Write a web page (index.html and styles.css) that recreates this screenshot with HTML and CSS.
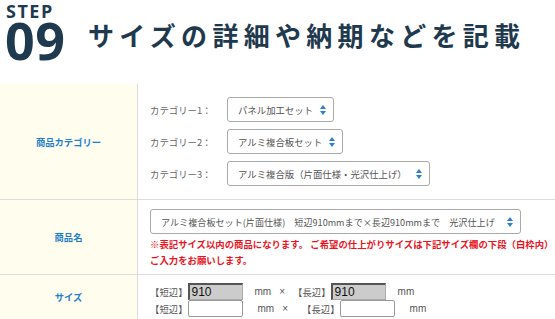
FILE: index.html
```html
<!DOCTYPE html>
<html lang="ja">
<head>
<meta charset="utf-8">
<title>STEP 09</title>
<link rel="stylesheet" href="styles.css">
</head>
<body>
<header class="step-head">
  <div class="step-num">
    <span class="step-label">STEP</span>
    <span class="step-digits">09</span>
  </div>
  <h1 class="step-title">サイズの詳細や納期などを記載</h1>
</header>

<section class="form-table">
  <div class="row row-cat">
    <div class="label">商品カテゴリー</div>
    <div class="field cat-field">
      <div class="cat-line">
        <span class="cat-name">カテゴリー1：</span>
        <div class="select"><span class="sel-text">パネル加工セット</span><svg class="arrows" viewBox="0 0 6 10" width="6" height="10"><path d="M3 0 L6 4 L0 4 Z M0 6 L6 6 L3 10 Z" fill="#2b7fd0"/></svg></div>
      </div>
      <div class="cat-line">
        <span class="cat-name">カテゴリー2：</span>
        <div class="select"><span class="sel-text">アルミ複合板セット</span><svg class="arrows" viewBox="0 0 6 10" width="6" height="10"><path d="M3 0 L6 4 L0 4 Z M0 6 L6 6 L3 10 Z" fill="#2b7fd0"/></svg></div>
      </div>
      <div class="cat-line">
        <span class="cat-name">カテゴリー3：</span>
        <div class="select sel-3"><span class="sel-text">アルミ複合版（片面仕様・光沢仕上げ）</span><svg class="arrows" viewBox="0 0 6 10" width="6" height="10"><path d="M3 0 L6 4 L0 4 Z M0 6 L6 6 L3 10 Z" fill="#2b7fd0"/></svg></div>
      </div>
    </div>
  </div>

  <div class="row row-name">
    <div class="label">商品名</div>
    <div class="field name-field">
      <div class="select sel-wide"><span class="sel-text">アルミ複合板セット(片面仕様)　短辺910mmまで×長辺910mmまで　光沢仕上げ</span><svg class="arrows" viewBox="0 0 6 10" width="6" height="10"><path d="M3 0 L6 4 L0 4 Z M0 6 L6 6 L3 10 Z" fill="#2b7fd0"/></svg></div>
      <p class="notice">※表記サイズ以内の商品になります。 ご希望の仕上がりサイズは下記サイズ欄の下段（白枠内）<br>ご入力をお願いします。</p>
    </div>
  </div>

  <div class="row row-size">
    <div class="label">サイズ</div>
    <div class="field size-field">
      <div class="size-line">
        <span class="side">【短辺】</span><span class="inp inp-fixed">910</span><span class="unit u1">mm</span><span class="times t1">×</span><span class="side">【長辺】</span><span class="inp inp-fixed">910</span><span class="unit u1">mm</span>
      </div>
      <div class="size-line">
        <span class="side">【短辺】</span><span class="inp inp-free"></span><span class="unit u2">mm</span><span class="times t2">×</span><span class="side">【長辺】</span><span class="inp inp-free"></span><span class="unit u2">mm</span>
      </div>
    </div>
  </div>
</section>
</body>
</html>
```

FILE: styles.css
```css
* { box-sizing: border-box; }

html, body {
  margin: 0;
  padding: 0;
  background: #ffffff;
  overflow: hidden;
}

body {
  font-family: "Noto Sans CJK JP", "Noto Sans", sans-serif;
  color: #555;
}

/* ---------- header ---------- */
.step-head {
  display: flex;
  align-items: flex-start;
  padding: 3px 0 0 5px;
  color: #1f3a4f;
}

.step-num {
  display: flex;
  flex-direction: column;
  width: 83px;
}

.step-label {
  font-family: "Open Sans", "Lato", sans-serif;
  font-weight: 700;
  font-size: 18px;
  line-height: 17px;
  letter-spacing: 1.5px;
  padding-left: 1px;
}

.step-digits {
  font-family: "Open Sans", "Lato", sans-serif;
  font-weight: 700;
  font-size: 52px;
  line-height: 40px;
  letter-spacing: 0.5px;
  margin-top: 0;
}

.step-title {
  margin: 17px 0 0 0;
  font-family: "Noto Sans CJK JP", sans-serif;
  font-weight: 700;
  font-size: 26px;
  line-height: 30px;
  letter-spacing: 5.3px;
  white-space: nowrap;
}

/* ---------- table ---------- */
.form-table {
  margin-top: 24px;
}

.row {
  display: grid;
  grid-template-columns: 138px 1fr;
  border-bottom: 1px solid #dcdcdc;
}

.label {
  background: #fffdee;
  border-right: 1px solid #dcdcdc;
  display: flex;
  align-items: center;
  justify-content: center;
  color: #1f7fcc;
  font-weight: 700;
  font-size: 9.3px;
}

.field {
  padding-left: 12px;
}

/* category row */
.cat-field {
  padding-top: 13px;
  padding-bottom: 13px;
  display: flex;
  flex-direction: column;
  gap: 7px;
}

.cat-line {
  display: flex;
  align-items: center;
}

.cat-name {
  width: 77px;
  font-size: 9.4px;
  color: #666;
}

.select {
  display: inline-flex;
  align-items: center;
  justify-content: space-between;
  height: 25px;
  padding: 0 7px 0 10px;
  border: 1px solid #a9a9a9;
  border-radius: 3px;
  background: #fff;
  font-size: 9.4px;
  color: #555;
  white-space: nowrap;
}

.sel-3 .arrows { margin-left: 9px; }

.sel-text { overflow: hidden; }

.arrows { flex: none; margin-left: 7px; }

/* name row */
.name-field {
  padding-top: 9px;
  padding-bottom: 6px;
}

.sel-wide {
  display: flex;
  width: 371px;
  height: 25px;
  font-size: 9.1px;
}

.sel-wide .arrows { margin-left: 2px; }

.notice {
  margin: 2px 0 0 0;
  color: #e8141e;
  font-weight: 700;
  font-size: 9.4px;
  line-height: 16px;
  white-space: nowrap;
}

/* size row */
.size-field {
  padding-top: 8px;
  padding-bottom: 2px;
}

.size-line {
  display: flex;
  align-items: center;
  height: 17px;
  font-size: 9.4px;
  color: #555;
}

.side { white-space: nowrap; }

.inp {
  display: inline-flex;
  align-items: center;
  width: 55px;
  height: 17px;
  padding-left: 2px;
  font-family: "Liberation Sans", sans-serif;
  font-size: 12px;
  color: #111;
}

.inp-fixed {
  background: #cccccc;
  border-top: 2px solid #555;
  border-left: 2px solid #555;
  border-right: 1px solid #aaa;
  border-bottom: 1px solid #aaa;
}

.inp-free {
  background: #fff;
  border: 1px solid #999;
  border-radius: 2px;
}

.unit { font-family: "Liberation Sans", sans-serif; font-size: 10px; }
.u1 { margin-left: 12px; }
.u2 { margin-left: 15px; }

.times { font-family: "Liberation Sans", sans-serif; font-size: 10px; }
.t1 { margin-left: 8px; margin-right: 8px; }
.t2 { margin-left: 8px; margin-right: 14px; }
```
